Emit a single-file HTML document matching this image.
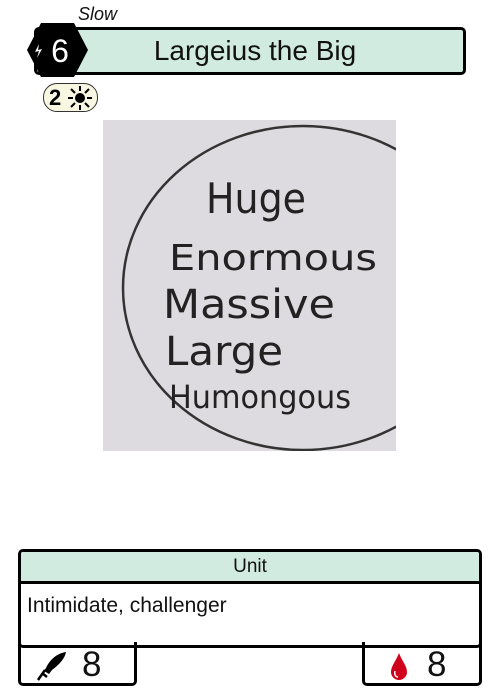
<!DOCTYPE html>
<html><head><style>
body{margin:0;width:500px;height:700px;background:#fff;position:relative;font-family:"Liberation Sans",sans-serif;overflow:hidden}
.abs{position:absolute}
</style></head><body>
<div class="abs" style="left:78px;top:4px;font-size:18px;font-style:italic;color:#111">Slow</div>
<div class="abs" style="left:34px;top:27px;width:426px;height:42px;background:#d1ebe1;border:3px solid #000;border-radius:5px;"></div>
<div class="abs" style="left:50px;top:34px;width:410px;text-align:center;font-size:28px;color:#111;line-height:34px">Largeius the Big</div>
<svg class="abs" style="left:26px;top:22px" width="64" height="56" viewBox="0 0 64 56">
<polygon points="15,1 48,1 62,28 48,55 15,55 1,28" fill="#000"/>
<path d="M13 22 L9 30 L13 29 L11 36 L16 27 L12 28 Z" fill="#fff"/>
<text x="34" y="40" font-size="32" fill="#fff" text-anchor="middle" font-family="Liberation Sans">6</text>
</svg>
<div class="abs" style="left:43px;top:83px;width:53px;height:27px;background:#f8f7e2;border:1.5px solid #333;border-radius:14px;"></div>
<div class="abs" style="left:49px;top:84px;font-size:22px;font-weight:bold;color:#000;line-height:27px">2</div>
<svg class="abs" style="left:66px;top:85px" width="28" height="26" viewBox="0 0 28 26">
<circle cx="14" cy="13" r="5" fill="#000"/>
<g stroke="#000" stroke-width="2">
<line x1="14" y1="1" x2="14" y2="6"/><line x1="14" y1="20" x2="14" y2="25"/>
<line x1="2" y1="13" x2="7" y2="13"/><line x1="21" y1="13" x2="26" y2="13"/>
<line x1="5" y1="4" x2="9" y2="8"/><line x1="19" y1="18" x2="23" y2="22"/>
<line x1="23" y1="4" x2="19" y2="8"/><line x1="9" y1="18" x2="5" y2="22"/>
</g></svg>
<svg class="abs" style="left:103px;top:120px" width="293" height="331" viewBox="0 0 293 331">
<rect width="293" height="331" fill="#dedbe0"/>
<ellipse cx="200" cy="168" rx="180" ry="162" fill="none" stroke="#333" stroke-width="2.5"/>
<g font-family="DejaVu Sans" fill="#222" font-weight="normal">
<text x="103" y="93" font-size="42" textLength="100" lengthAdjust="spacingAndGlyphs">Huge</text>
<text x="66" y="150" font-size="36" textLength="208" lengthAdjust="spacingAndGlyphs">Enormous</text>
<text x="60" y="198" font-size="40" textLength="172" lengthAdjust="spacingAndGlyphs">Massive</text>
<text x="62" y="245" font-size="40" textLength="118" lengthAdjust="spacingAndGlyphs">Large</text>
<text x="66" y="288" font-size="32" textLength="182" lengthAdjust="spacingAndGlyphs">Humongous</text>
</g></svg>
<div class="abs" style="left:18px;top:549px;width:458px;height:93px;border:3px solid #000;border-radius:5px;overflow:hidden">
<div style="height:29px;background:#d1ebe1;border-bottom:3px solid #000;text-align:center;font-size:19px;line-height:30px;color:#111">Unit</div>
<div style="padding:10px 6px;font-size:21px;color:#111">Intimidate, challenger</div>
</div>
<div class="abs" style="left:18px;top:642px;width:113px;height:41px;border:3px solid #000;border-top:none;border-radius:0 0 5px 5px;"></div>
<div class="abs" style="left:362px;top:642px;width:114px;height:41px;border:3px solid #000;border-top:none;border-radius:0 0 5px 5px;"></div>
<svg class="abs" style="left:36px;top:650px" width="32" height="32" viewBox="0 0 32 32">
<path d="M30 2 C22 3 14 9 10 18 L8 21 L13 24 L16 20 C24 14 29 8 30 2 Z" fill="#000"/>
<path d="M9 20 L2 30 M6 23 L11 27" stroke="#000" stroke-width="2.5"/>
</svg>
<div class="abs" style="left:82px;top:644px;font-size:35px;line-height:42px;color:#111">8</div>
<svg class="abs" style="left:388px;top:651px" width="22" height="30" viewBox="0 0 22 30">
<path d="M11 2 C8 10 3 15 3 21 A8 8 0 0 0 19 21 C19 15 14 10 11 2 Z" fill="#d0021b"/>
<path d="M7 20 C6 24 8 26 10 26" stroke="#fff" stroke-width="1.5" fill="none"/>
</svg>
<div class="abs" style="left:427px;top:644px;font-size:35px;line-height:42px;color:#111">8</div>
</body></html>
